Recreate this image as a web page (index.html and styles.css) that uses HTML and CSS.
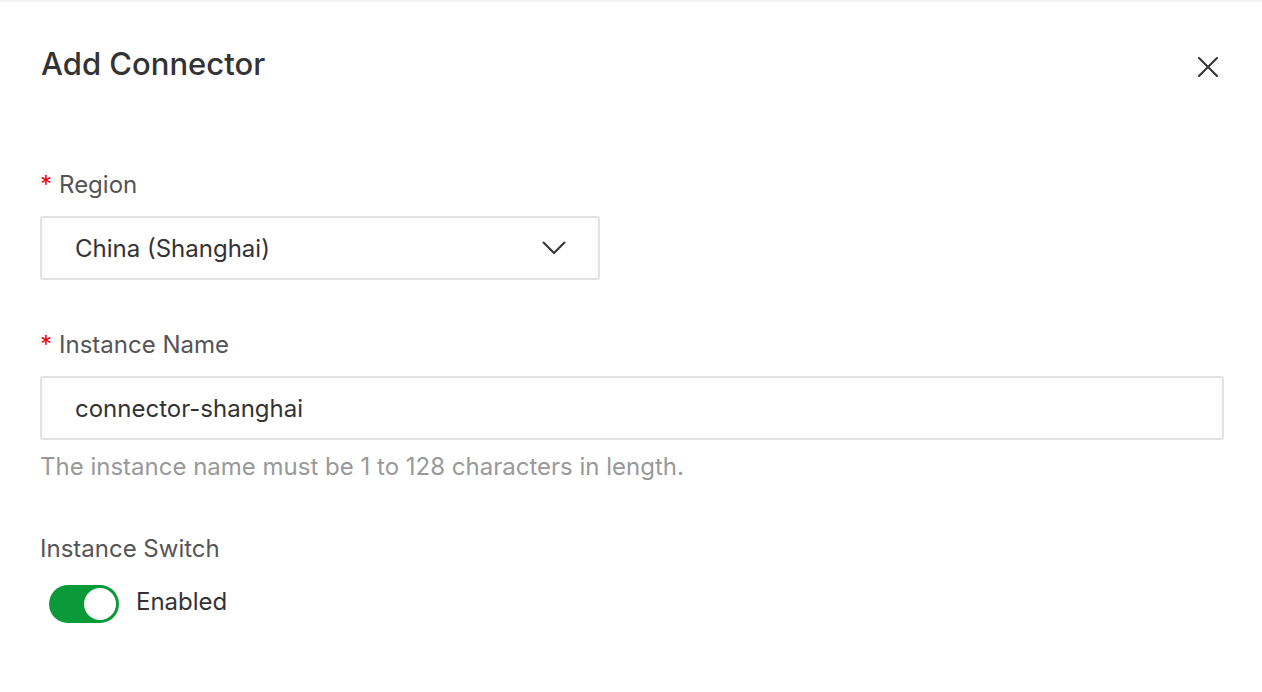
FILE: index.html
```html
<!DOCTYPE html>
<html lang="en">
<head>
<meta charset="utf-8">
<title>Add Connector</title>
<link rel="stylesheet" href="styles.css">
</head>
<body>
<div class="dialog">
  <div class="header">
    <h1 class="title">Add Connector</h1>
    <button class="close" aria-label="Close">
      <svg width="20" height="20" viewBox="0 0 20 20"><path d="M1 1L19 19M19 1L1 19" stroke="#333" stroke-width="2" stroke-linecap="round" fill="none"/></svg>
    </button>
  </div>
  <div class="form">
    <div class="field">
      <label class="label"><span class="req">*</span>Region</label>
      <div class="select">
        <span class="value">China (Shanghai)</span>
        <svg class="chev" width="24" height="14" viewBox="0 0 24 14"><path d="M1.5 1.5L12 12L22.5 1.5" stroke="#333" stroke-width="2" fill="none" stroke-linecap="round" stroke-linejoin="round"/></svg>
      </div>
    </div>
    <div class="field">
      <label class="label"><span class="req">*</span>Instance Name</label>
      <div class="input"><span class="value">connector-shanghai</span></div>
      <div class="help">The instance name must be 1 to 128 characters in length.</div>
    </div>
    <div class="field">
      <label class="label">Instance Switch</label>
      <div class="switch-row">
        <span class="switch"><span class="knob"></span></span>
        <span class="switch-text">Enabled</span>
      </div>
    </div>
  </div>
</div>
</body>
</html>
```
FILE: styles.css
```css
* { box-sizing: border-box; }
html, body { margin: 0; padding: 0; background: #fff; }
body {
  font-family: Inter, "Noto Sans", sans-serif;
  color: #333;
  width: 1262px;
  height: 692px;
  overflow: hidden;
  border-top: 2px solid #f3f3f3;
}
.dialog { padding: 0 38px 0 40px; }
.header {
  display: flex;
  align-items: flex-start;
  justify-content: space-between;
  height: 167px;
  padding-top: 43px;
}
.title {
  margin: 0 0 0 1px;
  font-size: 31px;
  line-height: 38px;
  font-weight: 500;
  color: #333;
}
.close {
  border: 0;
  background: none;
  padding: 0;
  width: 20px;
  height: 20px;
  display: flex;
  margin: 12px 6px 0 0;
}
.form { display: flex; flex-direction: column; }
.field { display: flex; flex-direction: column; margin-bottom: 49px; }
.label {
  font-size: 24px;
  color: #555;
  height: 32px;
  line-height: 32px;
  margin-bottom: 15px;
}
.req { color: #e00; margin-right: 7px; }
.select {
  width: 560px;
  height: 64px;
  border: 2px solid #e3e3e3;
  border-radius: 4px;
  display: flex;
  align-items: center;
  justify-content: space-between;
  padding: 0 32px 0 33px;
}
.value { font-size: 24px; color: #333; }
.input {
  width: 1184px;
  height: 64px;
  border: 2px solid #e3e3e3;
  border-radius: 4px;
  display: flex;
  align-items: center;
  padding: 0 33px;
}
.help { font-size: 24px; line-height: 32px; color: #999; margin-top: 11px; margin-bottom: 1px; }
.switch-row { display: flex; align-items: center; gap: 17px; padding-left: 9px; margin-top: 5px; }
.switch {
  width: 70px;
  height: 38px;
  border-radius: 19px;
  background: #0a9a3a;
  display: flex;
  align-items: center;
  justify-content: flex-end;
  padding-right: 3px;
}
.knob { width: 32px; height: 32px; border-radius: 50%; background: #fff; }
.switch-text { font-size: 24px; line-height: 32px; color: #333; padding-bottom: 4px; }
```
